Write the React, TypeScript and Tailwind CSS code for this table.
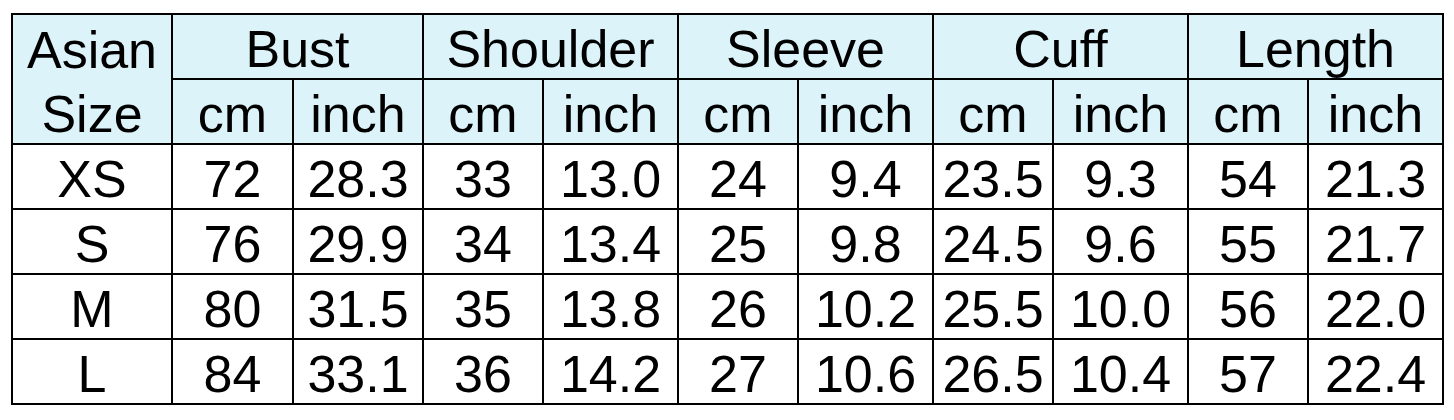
import React from "react";

const groups = ["Bust", "Shoulder", "Sleeve", "Cuff", "Length"];
const rows: [string, string[]][] = [
  ["XS", ["72", "28.3", "33", "13.0", "24", "9.4", "23.5", "9.3", "54", "21.3"]],
  ["S", ["76", "29.9", "34", "13.4", "25", "9.8", "24.5", "9.6", "55", "21.7"]],
  ["M", ["80", "31.5", "35", "13.8", "26", "10.2", "25.5", "10.0", "56", "22.0"]],
  ["L", ["84", "33.1", "36", "14.2", "27", "10.6", "26.5", "10.4", "57", "22.4"]],
];

const head = "bg-[#dcf3f9] flex items-center justify-center pt-[5px]";
const cell = "bg-white flex items-center justify-center pt-[5px]";

export default function App() {
  return (
    <div
      className="w-[1454px] h-[420px] bg-white pt-[13px] pl-[11px] text-black text-[52px] leading-none"
      style={{ fontFamily: '"Liberation Sans", Arial, sans-serif' }}
    >
      <div className="inline-grid bg-black p-[2px] gap-[2px] grid-cols-[158px_119px_128px_118px_133px_118px_133px_118px_133px_118px_133px] grid-rows-[repeat(6,63px)]">
        <div className="row-span-2 bg-[#dcf3f9] flex flex-col">
          <div className="h-1/2 flex items-center justify-center pt-[5px]">Asian</div>
          <div className="h-1/2 flex items-center justify-center pt-[5px]">Size</div>
        </div>
        {groups.map((g) => (
          <div key={g} className={`col-span-2 ${head}`}>
            {g}
          </div>
        ))}
        {groups.map((g) => (
          <React.Fragment key={g + "u"}>
            <div className={head}>cm</div>
            <div className={head}>inch</div>
          </React.Fragment>
        ))}
        {rows.map(([size, vals]) => (
          <React.Fragment key={size}>
            <div className={cell}>{size}</div>
            {vals.map((v, i) => (
              <div key={i} className={cell}>
                {v}
              </div>
            ))}
          </React.Fragment>
        ))}
      </div>
    </div>
  );
}
